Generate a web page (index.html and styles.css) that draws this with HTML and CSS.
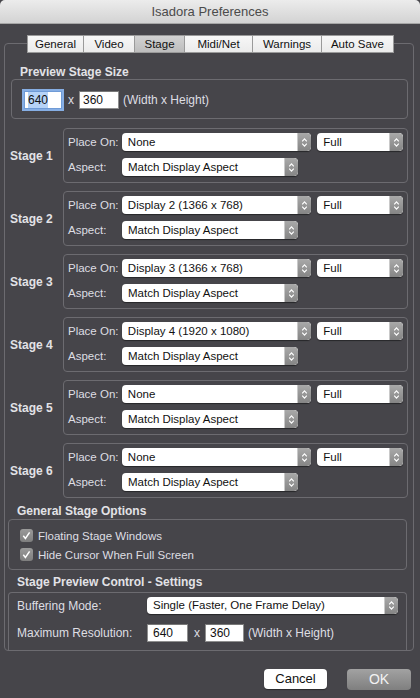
FILE: index.html
```html
<!DOCTYPE html>
<html>
<head>
<meta charset="utf-8">
<title>Isadora Preferences</title>
<link rel="stylesheet" href="styles.css">
</head>
<body>
<div class="titlebar">Isadora Preferences</div>
<div class="panel">
  <div class="tabs">
    <div class="tab w1">General</div>
    <div class="tab w2">Video</div>
    <div class="tab w3 active">Stage</div>
    <div class="tab w4">Midi/Net</div>
    <div class="tab w5">Warnings</div>
    <div class="tab w6">Auto Save</div>
  </div>

  <div class="section-title st-preview">Preview Stage Size</div>
  <div class="group preview">
    <span class="field w-a focused"><span class="selected-text">640</span></span>
    <span class="times">x</span>
    <span class="field w-b">360</span>
    <span class="hint">(Width x Height)</span>
  </div>

  <div class="stage first">
    <div class="stage-label">Stage 1</div>
    <div class="stage-box">
      <div class="row"><span class="lbl">Place On:</span>
        <div class="select place"><span class="val">None</span><span class="arrows"><svg viewBox="0 0 7 11" width="7" height="11"><path d="M1.2 4.3 3.5 1.9 5.8 4.3M1.2 6.7 3.5 9.1 5.8 6.7"/></svg></span></div>
        <div class="select full"><span class="val">Full</span><span class="arrows"><svg viewBox="0 0 7 11" width="7" height="11"><path d="M1.2 4.3 3.5 1.9 5.8 4.3M1.2 6.7 3.5 9.1 5.8 6.7"/></svg></span></div>
      </div>
      <div class="row"><span class="lbl">Aspect:</span>
        <div class="select aspect"><span class="val">Match Display Aspect</span><span class="arrows"><svg viewBox="0 0 7 11" width="7" height="11"><path d="M1.2 4.3 3.5 1.9 5.8 4.3M1.2 6.7 3.5 9.1 5.8 6.7"/></svg></span></div>
      </div>
    </div>
  </div>

  <div class="stage">
    <div class="stage-label">Stage 2</div>
    <div class="stage-box">
      <div class="row"><span class="lbl">Place On:</span>
        <div class="select place"><span class="val">Display 2 (1366 x 768)</span><span class="arrows"><svg viewBox="0 0 7 11" width="7" height="11"><path d="M1.2 4.3 3.5 1.9 5.8 4.3M1.2 6.7 3.5 9.1 5.8 6.7"/></svg></span></div>
        <div class="select full"><span class="val">Full</span><span class="arrows"><svg viewBox="0 0 7 11" width="7" height="11"><path d="M1.2 4.3 3.5 1.9 5.8 4.3M1.2 6.7 3.5 9.1 5.8 6.7"/></svg></span></div>
      </div>
      <div class="row"><span class="lbl">Aspect:</span>
        <div class="select aspect"><span class="val">Match Display Aspect</span><span class="arrows"><svg viewBox="0 0 7 11" width="7" height="11"><path d="M1.2 4.3 3.5 1.9 5.8 4.3M1.2 6.7 3.5 9.1 5.8 6.7"/></svg></span></div>
      </div>
    </div>
  </div>

  <div class="stage">
    <div class="stage-label">Stage 3</div>
    <div class="stage-box">
      <div class="row"><span class="lbl">Place On:</span>
        <div class="select place"><span class="val">Display 3 (1366 x 768)</span><span class="arrows"><svg viewBox="0 0 7 11" width="7" height="11"><path d="M1.2 4.3 3.5 1.9 5.8 4.3M1.2 6.7 3.5 9.1 5.8 6.7"/></svg></span></div>
        <div class="select full"><span class="val">Full</span><span class="arrows"><svg viewBox="0 0 7 11" width="7" height="11"><path d="M1.2 4.3 3.5 1.9 5.8 4.3M1.2 6.7 3.5 9.1 5.8 6.7"/></svg></span></div>
      </div>
      <div class="row"><span class="lbl">Aspect:</span>
        <div class="select aspect"><span class="val">Match Display Aspect</span><span class="arrows"><svg viewBox="0 0 7 11" width="7" height="11"><path d="M1.2 4.3 3.5 1.9 5.8 4.3M1.2 6.7 3.5 9.1 5.8 6.7"/></svg></span></div>
      </div>
    </div>
  </div>

  <div class="stage">
    <div class="stage-label">Stage 4</div>
    <div class="stage-box">
      <div class="row"><span class="lbl">Place On:</span>
        <div class="select place"><span class="val">Display 4 (1920 x 1080)</span><span class="arrows"><svg viewBox="0 0 7 11" width="7" height="11"><path d="M1.2 4.3 3.5 1.9 5.8 4.3M1.2 6.7 3.5 9.1 5.8 6.7"/></svg></span></div>
        <div class="select full"><span class="val">Full</span><span class="arrows"><svg viewBox="0 0 7 11" width="7" height="11"><path d="M1.2 4.3 3.5 1.9 5.8 4.3M1.2 6.7 3.5 9.1 5.8 6.7"/></svg></span></div>
      </div>
      <div class="row"><span class="lbl">Aspect:</span>
        <div class="select aspect"><span class="val">Match Display Aspect</span><span class="arrows"><svg viewBox="0 0 7 11" width="7" height="11"><path d="M1.2 4.3 3.5 1.9 5.8 4.3M1.2 6.7 3.5 9.1 5.8 6.7"/></svg></span></div>
      </div>
    </div>
  </div>

  <div class="stage">
    <div class="stage-label">Stage 5</div>
    <div class="stage-box">
      <div class="row"><span class="lbl">Place On:</span>
        <div class="select place"><span class="val">None</span><span class="arrows"><svg viewBox="0 0 7 11" width="7" height="11"><path d="M1.2 4.3 3.5 1.9 5.8 4.3M1.2 6.7 3.5 9.1 5.8 6.7"/></svg></span></div>
        <div class="select full"><span class="val">Full</span><span class="arrows"><svg viewBox="0 0 7 11" width="7" height="11"><path d="M1.2 4.3 3.5 1.9 5.8 4.3M1.2 6.7 3.5 9.1 5.8 6.7"/></svg></span></div>
      </div>
      <div class="row"><span class="lbl">Aspect:</span>
        <div class="select aspect"><span class="val">Match Display Aspect</span><span class="arrows"><svg viewBox="0 0 7 11" width="7" height="11"><path d="M1.2 4.3 3.5 1.9 5.8 4.3M1.2 6.7 3.5 9.1 5.8 6.7"/></svg></span></div>
      </div>
    </div>
  </div>

  <div class="stage">
    <div class="stage-label">Stage 6</div>
    <div class="stage-box">
      <div class="row"><span class="lbl">Place On:</span>
        <div class="select place"><span class="val">None</span><span class="arrows"><svg viewBox="0 0 7 11" width="7" height="11"><path d="M1.2 4.3 3.5 1.9 5.8 4.3M1.2 6.7 3.5 9.1 5.8 6.7"/></svg></span></div>
        <div class="select full"><span class="val">Full</span><span class="arrows"><svg viewBox="0 0 7 11" width="7" height="11"><path d="M1.2 4.3 3.5 1.9 5.8 4.3M1.2 6.7 3.5 9.1 5.8 6.7"/></svg></span></div>
      </div>
      <div class="row"><span class="lbl">Aspect:</span>
        <div class="select aspect"><span class="val">Match Display Aspect</span><span class="arrows"><svg viewBox="0 0 7 11" width="7" height="11"><path d="M1.2 4.3 3.5 1.9 5.8 4.3M1.2 6.7 3.5 9.1 5.8 6.7"/></svg></span></div>
      </div>
    </div>
  </div>

  <div class="section-title st-general">General Stage Options</div>
  <div class="group options">
    <div class="check-row"><span class="checkbox"><svg viewBox="0 0 13 13" width="13" height="13"><path d="M3.3 6.8 5.4 9.4 9.6 3.4"/></svg></span><span class="check-label">Floating Stage Windows</span></div>
    <div class="check-row"><span class="checkbox"><svg viewBox="0 0 13 13" width="13" height="13"><path d="M3.3 6.8 5.4 9.4 9.6 3.4"/></svg></span><span class="check-label">Hide Cursor When Full Screen</span></div>
  </div>

  <div class="section-title st-control">Stage Preview Control - Settings</div>
  <div class="group control">
    <div class="ctrl-row"><span class="ctrl-lbl">Buffering Mode:</span>
      <div class="select buffering"><span class="val">Single (Faster, One Frame Delay)</span><span class="arrows"><svg viewBox="0 0 7 11" width="7" height="11"><path d="M1.2 4.3 3.5 1.9 5.8 4.3M1.2 6.7 3.5 9.1 5.8 6.7"/></svg></span></div>
    </div>
    <div class="ctrl-row res"><span class="ctrl-lbl">Maximum Resolution:</span>
      <span class="field w-c">640</span>
      <span class="times">x</span>
      <span class="field w-d">360</span>
      <span class="hint">(Width x Height)</span>
    </div>
  </div>
</div>

<div class="buttons">
  <div class="btn cancel">Cancel</div>
  <div class="btn ok">OK</div>
</div>
</body>
</html>
```

FILE: styles.css
```css
* { box-sizing: border-box; }

body {
  margin: 0;
  width: 420px;
  height: 698px;
  overflow: hidden;
  background: #46454a;
  font-family: "Liberation Sans", Arial, sans-serif;
  color: #dedee3;
}

.titlebar {
  height: 24px;
  line-height: 23px;
  text-align: center;
  font-size: 13px;
  color: #4b4b4b;
  background: linear-gradient(#ececec, #d3d3d3);
  border-bottom: 1px solid #a6a6a6;
  border-radius: 5px 5px 0 0;
}

.panel {
  margin: 19px 0 0 4px;
  width: 410px;
  height: 608px;
  border: 1px solid #6c6b70;
  border-radius: 4px;
  display: flex;
  flex-direction: column;
}

/* tabs */
.tabs {
  display: flex;
  margin: -9px 0 0 22px;
  height: 18px;
  flex: none;
}
.tab {
  height: 18px;
  line-height: 16px;
  font-size: 11.5px;
  color: #111;
  text-align: center;
  background: linear-gradient(#f7f7f7, #ebebeb);
  border: 1px solid #9a9a9a;
  border-left: none;
}
.tab.w1 { width: 57px; border-left: 1px solid #9a9a9a; }
.tab.w2 { width: 51px; }
.tab.w3 { width: 50px; }
.tab.w4 { width: 68px; }
.tab.w5 { width: 69px; }
.tab.w6 { width: 72px; }
.tab.active { background: linear-gradient(#d2d2d2, #bdbdbd); }

/* section titles */
.section-title {
  font-weight: bold;
  font-size: 12px;
  line-height: 14px;
  height: 14px;
  flex: none;
  color: #e2e2e6;
}
.st-preview { margin: 12px 0 0 15px; }
.st-general { margin: 6px 0 1px 12px; }
.st-control { margin: 5px 0 3px 12px; }

.group {
  border: 1px solid #6c6b70;
  border-radius: 4px;
  flex: none;
}

/* preview stage size */
.preview {
  margin-left: 6px;
  width: 397px;
  height: 40px;
  padding: 11px 0 0 12px;
  display: flex;
  align-items: flex-start;
}

.field {
  display: inline-block;
  height: 18px;
  line-height: 17px;
  background: #fff;
  border: 1px solid #8e8e8e;
  border-top-color: #777;
  color: #111;
  font-size: 12px;
  padding-left: 3px;
}
.w-a { width: 38px; }
.w-b { width: 40px; }
.w-c { width: 41px; padding-left: 5px; }
.w-d { width: 39px; padding-left: 4px; }
.focused {
  border-color: #6f9bd6;
  box-shadow: 0 0 0 2px #86aee4;
}
.selected-text { background: #b6d3f7; padding: 1px 0; }
.times {
  font-size: 12px;
  line-height: 18px;
  color: #dedee3;
  margin: 0 5px 0 6px;
}
.hint {
  font-size: 12px;
  line-height: 18px;
  margin-left: 4px;
  color: #dedee3;
}

/* stages */
.stage {
  display: flex;
  align-items: center;
  margin-top: 8px;
  flex: none;
}
.stage.first { margin-top: 9px; }
.stage-label {
  width: 58px;
  padding-left: 5px;
  font-weight: bold;
  font-size: 12px;
  color: #e2e2e6;
}
.stage-box {
  width: 345px;
  height: 55px;
  border: 1px solid #6c6b70;
  border-radius: 4px;
  padding: 4px 4px 0 4px;
  display: flex;
  flex-direction: column;
  gap: 7px;
}
.row {
  display: flex;
  align-items: center;
  height: 18px;
}
.lbl {
  width: 54px;
  font-size: 11.5px;
  color: #dedee3;
}

.select {
  display: flex;
  height: 18px;
  background: #fff;
  border-radius: 4px;
  box-shadow: 0 1px 1px rgba(0, 0, 0, 0.45);
  overflow: hidden;
}
.select .val {
  flex: 1;
  padding-left: 6px;
  line-height: 18px;
  font-size: 11.5px;
  color: #111;
  white-space: nowrap;
}
.select .arrows {
  width: 14px;
  display: flex;
  align-items: center;
  justify-content: center;
  background: linear-gradient(#a9a9a9, #858585);
  border-radius: 0 4px 4px 0;
  border-left: 1px solid #c9c9c9;
}
.select .arrows path {
  fill: none;
  stroke: #fff;
  stroke-width: 1.2;
}
.select.place { width: 190px; }
.select.full { width: 86px; margin-left: 6px; }
.select.aspect { width: 176px; }

/* general options */
.options {
  margin-left: 3px;
  width: 399px;
  height: 51px;
  padding: 6px 0 0 11px;
}
.check-row {
  display: flex;
  align-items: center;
  height: 19px;
}
.checkbox {
  width: 13px;
  height: 13px;
  border-radius: 3px;
  background: linear-gradient(#9a9a9a, #7e7e7e);
  display: flex;
}
.checkbox path {
  fill: none;
  stroke: #fff;
  stroke-width: 1.5;
}
.check-label {
  margin-left: 5px;
  font-size: 11.5px;
  color: #dedee3;
}

/* stage preview control */
.control {
  margin-left: 3px;
  width: 399px;
  flex: 1;
  border-bottom: none;
  border-radius: 4px 4px 0 0;
  padding: 4px 0 0 8px;
}
.ctrl-row {
  display: flex;
  align-items: center;
  height: 17px;
}
.ctrl-row.res { margin-top: 10px; height: 18px; }
.ctrl-lbl {
  width: 130px;
  font-size: 12px;
  color: #dedee3;
}
.select.buffering { width: 251px; height: 17px; }
.select.buffering .val { line-height: 17px; }

/* buttons */
.buttons {
  display: flex;
  justify-content: flex-end;
  gap: 20px;
  margin-top: 18px;
  padding-right: 9px;
}
.btn {
  height: 20px;
  line-height: 20px;
  text-align: center;
  font-size: 13px;
  border-radius: 4px;
}
.cancel {
  width: 63px;
  background: #fff;
  color: #111;
  box-shadow: 0 1px 1px rgba(0, 0, 0, 0.4);
}
.ok {
  width: 64px;
  height: 21px;
  background: linear-gradient(#a2a2a2, #7f7f7f);
  color: #f2f2f2;
  font-size: 14px;
}
```
